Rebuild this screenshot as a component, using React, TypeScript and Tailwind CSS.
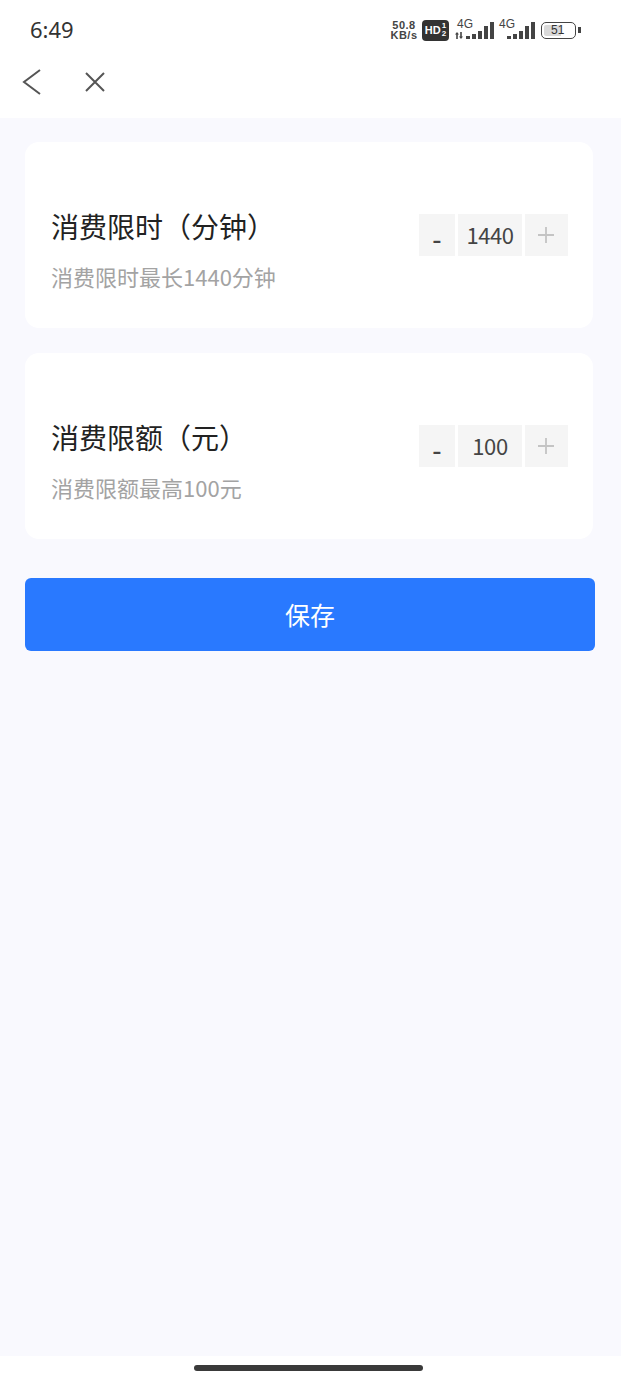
const font = { fontFamily: '"Noto Sans CJK SC", "Noto Sans", sans-serif' };

function Signal({ bars }: { bars: number[] }) {
  return (
    <div className="flex items-end gap-[2px]">
      {bars.map((h, i) => (
        <div key={i} className="w-[4px] bg-[#444]" style={{ height: h }} />
      ))}
    </div>
  );
}

function StatusBar() {
  return (
    <div className="h-[59px] flex items-center justify-between pl-[30px] pr-[40px] pb-[1px]">
      <span className="text-[22px] text-[#333] leading-none" style={{ fontFamily: '"Noto Sans", sans-serif' }}>6:49</span>
      <div className="flex items-center pt-[2px]" style={{ fontFamily: '"Liberation Sans", sans-serif' }}>
        <div className="w-[28px] text-[11px] leading-[10px] font-bold text-[#444] flex flex-col items-center tracking-[0.5px]">
          <span className="h-[10px]">50.8</span>
          <span className="h-[10px]">KB/s</span>
        </div>
        <div className="ml-[4px] w-[27px] h-[21px] rounded-[4px] bg-[#333] text-white flex items-center justify-center gap-[1px]">
          <span className="text-[11px] font-bold leading-none">HD</span>
          <span className="flex flex-col text-[8px] font-bold leading-[8px]"><span>1</span><span>2</span></span>
        </div>
        <div className="relative ml-[6px] w-[40px] h-[22px]">
          <span className="absolute left-[2px] -top-[1px] text-[12px] leading-[12px] text-[#444]">4G</span>
          <svg className="absolute left-0 bottom-[2px]" width="8" height="7" viewBox="0 0 8 7" fill="#444">
            <path d="M2 0 L4 2.5 H2.8 V7 H1.2 V2.5 H0 Z M6 7 L4 4.5 H5.2 V0 H6.8 V4.5 H8 Z" />
          </svg>
          <div className="absolute right-[1px] bottom-[2px]"><Signal bars={[3, 5, 8, 13, 17]} /></div>
        </div>
        <div className="relative ml-[2px] w-[38px] h-[22px]">
          <span className="absolute left-[2px] -top-[1px] text-[12px] leading-[12px] text-[#444]">4G</span>
          <div className="absolute right-0 bottom-[2px]"><Signal bars={[3, 5, 8, 13, 17]} /></div>
        </div>
        <div className="ml-[6px] flex items-center">
          <div className="relative w-[35px] h-[17px] rounded-[5px] border-[1.5px] border-[#444] p-[2px] flex">
            <div className="w-[17px] bg-[#d9d9d9] rounded-l-[2px]" />
            <span className="absolute left-[9px] top-0 text-[12px] leading-[14px] text-[#333]">51</span>
          </div>
          <div className="ml-[2px] w-[3px] h-[6px] bg-[#444]" />
        </div>
      </div>
    </div>
  );
}

function NavBar() {
  return (
    <div className="h-[59px] flex items-center pl-[21px] pb-[13px]">
      <svg width="22" height="28" viewBox="0 0 22 28" fill="none" stroke="#555" strokeWidth="2">
        <path d="M19 2 L3 14 L19 26" />
      </svg>
      <svg className="ml-[40px]" width="24" height="24" viewBox="0 0 24 24" fill="none" stroke="#555" strokeWidth="2">
        <path d="M3 3 L21 21 M21 3 L3 21" />
      </svg>
    </div>
  );
}

function Stepper({ value }: { value: string }) {
  return (
    <div className="flex gap-[3px] h-[42px] text-[#444]">
      <div className="w-[36px] bg-[#f5f5f5] flex items-center justify-center text-[26px] font-medium pt-[5px]">-</div>
      <div className="w-[64px] bg-[#f5f5f5] flex items-center justify-center text-[22px] tracking-[-0.4px]">{value}</div>
      <div className="w-[43px] bg-[#f5f5f5] flex items-center justify-center pr-[1px]">
        <svg width="16" height="16" viewBox="0 0 16 16" stroke="#c4c4c4" strokeWidth="1.8"><path d="M8 0 V16 M0 8 H16" /></svg>
      </div>
    </div>
  );
}

function Card({ title, hint, value }: { title: string; hint: string; value: string }) {
  return (
    <div className="h-[186px] ml-[25px] mr-[28px] bg-white rounded-[14px] flex items-center justify-between pl-[26px] pr-[25px]">
      <div className="pt-[27px]">
        <div className="text-[28px] leading-[40px] text-[#222]">{title}</div>
        <div className="mt-[14px] text-[22px] leading-[32px] text-[#a3a3a3]">{hint}</div>
      </div>
      <div className="pb-[1px]"><Stepper value={value} /></div>
    </div>
  );
}

export default function App() {
  return (
    <div className="w-[621px] h-[1381px] bg-white flex flex-col overflow-hidden" style={font}>
      <StatusBar />
      <NavBar />
      <div className="flex-1 bg-[#f9f9fe] pt-[24px] flex flex-col gap-[25px]">
        <Card title="消费限时（分钟）" hint="消费限时最长1440分钟" value="1440" />
        <Card title="消费限额（元）" hint="消费限额最高100元" value="100" />
        <button className="mt-[14px] ml-[25px] mr-[26px] h-[73px] bg-[#2979ff] rounded-[6px] text-white text-[25px]">保存</button>
      </div>
      <div className="h-[25px] flex justify-center pt-[9px] pr-[4px]">
        <div className="w-[229px] h-[6px] rounded-full bg-[#3a3a3a]" />
      </div>
    </div>
  );
}
